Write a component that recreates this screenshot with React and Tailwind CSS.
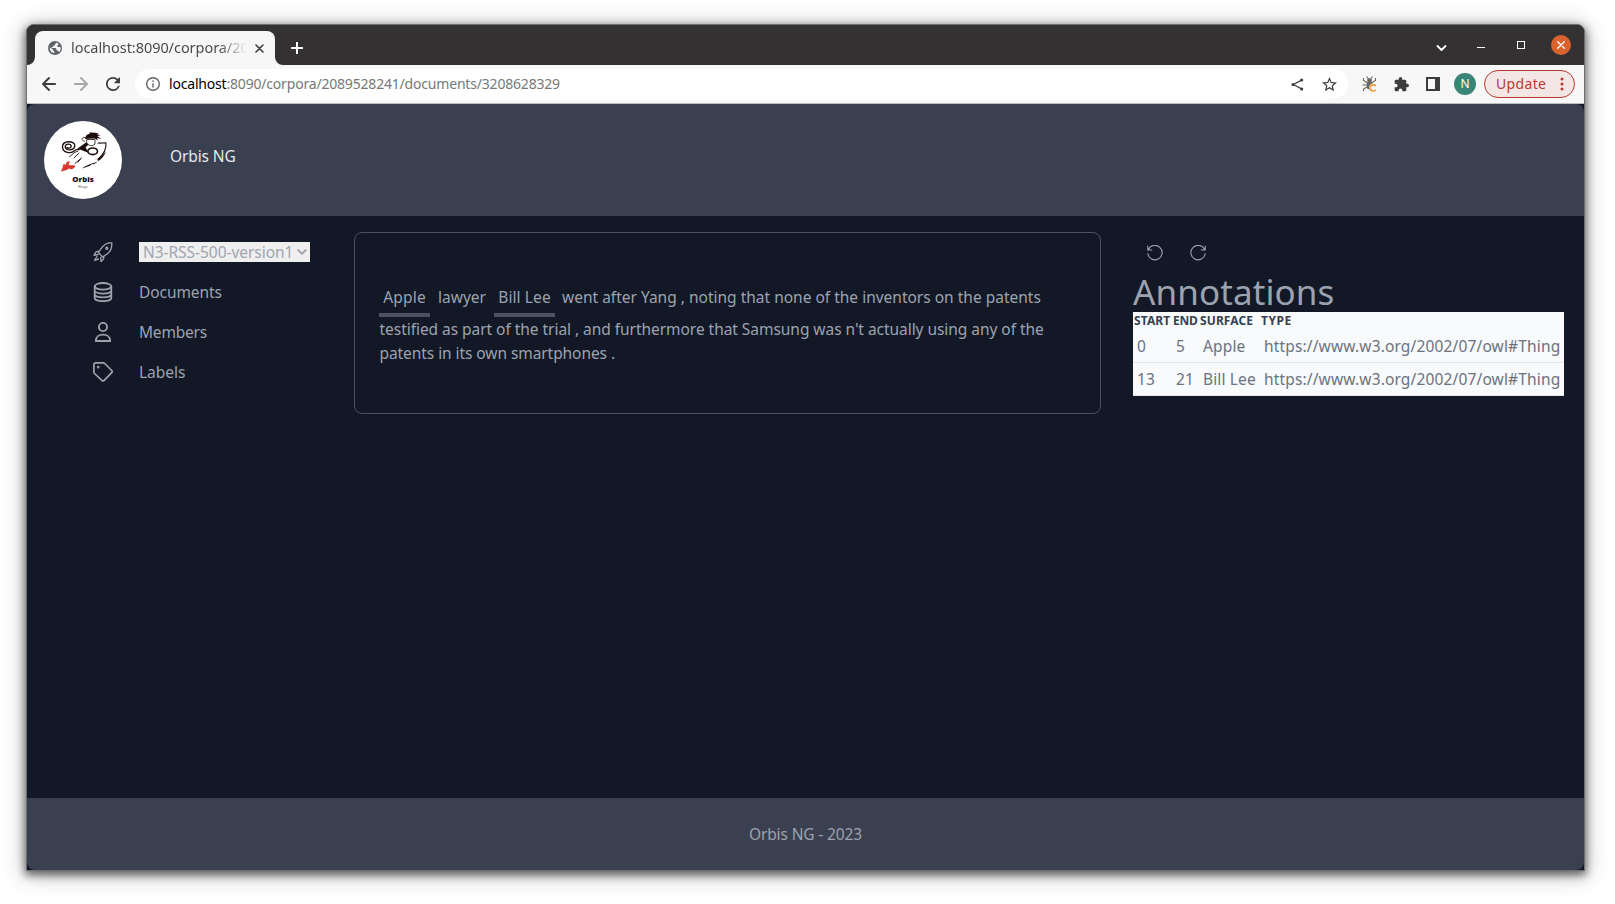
import React from "react";

function Svg({ children, className, box = "0 0 24 24", sw = 1.5 }) {
  return (
    <svg
      viewBox={box}
      className={className}
      fill="none"
      stroke="currentColor"
      strokeWidth={sw}
      strokeLinecap="round"
      strokeLinejoin="round"
    >
      {children}
    </svg>
  );
}

function TabBar() {
  return (
    <div className="flex h-10 shrink-0 items-end bg-[#333132]">
      <svg viewBox="0 0 8 8" className="size-2 shrink-0 fill-[#f7f7f7]">
        <path d="M8 0v8H0a8 8 0 0 0 8-8Z" />
      </svg>
      <div className="flex h-[34px] w-[240px] shrink-0 items-center rounded-t-lg bg-[#f7f7f7] pl-[13px]">
        <svg viewBox="0 0 14 14" className="size-[14px] shrink-0">
          <circle cx="7" cy="7" r="7" fill="#5f6368" />
          <path
            d="M8.6 1.7 7 3.2v1.3H5.3v1.6H3.8l-.1 1h3.8l1 1v1.5h1.6l.9 1.6c1.5-1.3 2-3.3 1.4-5.2H10L8.8 4.8l1.8-1.1c.2-.8-.8-1.6-2-2ZM1.7 6.6c-.2 2.9 1.7 5.2 4.6 5.7v-1.7L4.800 9.300V8.200Z"
            fill="#f7f7f7"
          />
        </svg>
        <span className="mb-0.5 ml-[9px] w-[176px] overflow-hidden bg-linear-to-r from-[#454647] from-84% to-transparent bg-clip-text text-[14.5px] leading-5 tracking-[-0.05px] whitespace-nowrap text-transparent">
          localhost:8090/corpora/20
        </span>
        <Svg className="ml-2 size-[9px] shrink-0 text-[#3c4043]" box="0 0 9 9" sw={1.6}>
          <path d="M1 1l7 7M8 1L1 8" />
        </Svg>
      </div>
      <svg viewBox="0 0 8 8" className="size-2 shrink-0 fill-[#f7f7f7]">
        <path d="M0 0v8h8a8 8 0 0 1-8-8Z" />
      </svg>
      <div className="flex h-[34px] flex-1 items-center pr-[13px] pl-2 text-white">
        <Svg className="size-3" box="0 0 12 12" sw={2}>
          <path d="M6 .8v10.400M.8 6h10.400" />
        </Svg>
        <div className="flex-1" />
        <div className="flex items-center pb-1.5">
          <Svg className="mt-[6px] size-[11px]" box="0 0 11 11" sw={1.800}>
            <path d="M1.500 3l4 4 4-4" />
          </Svg>
          <div className="mt-[5px] ml-[30px] h-px w-2 bg-white" />
          <div className="ml-8 size-2 border border-white" />
          <div className="ml-[26px] flex size-5 items-center justify-center rounded-full bg-[#d9622f]">
            <Svg className="size-2" box="0 0 8 8" sw={1.3}>
              <path d="M.7.7l6.600 6.600M7.300.7L.7 7.300" />
            </Svg>
          </div>
        </div>
      </div>
    </div>
  );
}

function BugIcon() {
  return (
    <svg viewBox="0 0 16 16" className="size-4">
      <g stroke="#6b6762" strokeWidth="1.100" fill="none">
        <path d="M4.500.5l2 2.500M10.500.5l-2 2.500M5 6.500L1.500 4.500V2M10 6.500l3.500-2V2M4.500 9H.5M5 11l-3.500 2v2M10.500 8.500H14" />
      </g>
      <ellipse cx="7.500" cy="4" rx="2.500" ry="1.700" fill="#6b6762" />
      <ellipse cx="7.500" cy="9" rx="3" ry="4.500" fill="#6b6762" />
      <circle cx="11.200" cy="11.800" r="4.200" fill="#f7f7f7" />
      <path d="M13.700 10.200a3.100 3.100 0 1 0 0 3.400" stroke="#f29a38" strokeWidth="1.700" fill="none" />
    </svg>
  );
}

function Toolbar() {
  return (
    <div className="flex h-[39px] shrink-0 items-center border-b border-[#b9bdbf] bg-[#f7f7f7] pr-[9px] pl-[15px] text-[#3c3d3f]">
      <Svg className="size-[14px]" box="0 0 14 14" sw={1.900}>
        <path d="M13.200 7H1.300M7 1L1 7l6 6" />
      </Svg>
      <Svg className="ml-[18px] size-[14px] text-[#a7a7a7]" box="0 0 14 14" sw={1.900}>
        <path d="M.8 7h11.900M7 1l6 6-6 6" />
      </Svg>
      <svg viewBox="4 4 16 16" className="ml-[18px] size-[14px] fill-current">
        <path d="M17.650 6.350A7.960 7.960 0 0 0 12 4a8 8 0 1 0 7.730 10h-2.080A6 6 0 1 1 12 6c1.660 0 3.140.69 4.220 1.780L13 11h7V4l-2.350 2.350z" />
      </svg>
      <div className="ml-[15px] flex h-[30px] flex-1 items-center rounded-full bg-white pr-[11px] pl-[11px]">
        <svg viewBox="0 0 14 14" className="size-[14px]">
          <circle cx="7" cy="7" r="6.300" fill="none" stroke="#5f6368" strokeWidth="1.400" />
          <path d="M6.300 6.200h1.400v4.300H6.300zM6.300 3.500h1.400v1.400H6.300z" fill="#5f6368" />
        </svg>
        <span className="ml-[9px] text-[14px] leading-5 tracking-[-0.19px] text-[#75787b]">
          <span className="text-black">localhost</span>:8090/corpora/2089528241/documents/3208628329
        </span>
        <div className="flex-1" />
        <svg viewBox="0 0 14 14" className="size-[13px]">
          <path d="M11.500 2.300L2.500 7l9 4.700" fill="none" stroke="currentColor" strokeWidth="1.300" />
          <circle cx="11.500" cy="2.200" r="1.700" fill="currentColor" />
          <circle cx="2.200" cy="7" r="1.700" fill="currentColor" />
          <circle cx="11.500" cy="11.800" r="1.700" fill="currentColor" />
        </svg>
        <svg viewBox="2 2 20 20" className="ml-[18px] size-[15px] fill-current">
          <path d="M22 9.240l-7.190-.62L12 2 9.190 8.630 2 9.240l5.460 4.730L5.820 21 12 17.270 18.180 21l-1.630-7.030L22 9.240zM12 15.400l-3.760 2.270 1-4.280-3.320-2.880 4.380-.38L12 6.100l1.710 4.040 4.380.38-3.320 2.880 1 4.280L12 15.400z" />
        </svg>
      </div>
      <div className="ml-[14px]">
        <BugIcon />
      </div>
      <svg viewBox="1 1 22 22" className="ml-4 size-[15px] fill-current">
        <path d="M20.500 11H19V7a2 2 0 0 0-2-2h-4V3.500a2.500 2.500 0 0 0-5 0V5H4a2 2 0 0 0-2 2v3.800h1.500a2.700 2.700 0 0 1 0 5.400H2V20a2 2 0 0 0 2 2h3.800v-1.500a2.700 2.700 0 0 1 5.400 0V22H17a2 2 0 0 0 2-2v-4h1.500a2.500 2.500 0 0 0 0-5z" />
      </svg>
      <div className="ml-[17px] h-[14px] w-[14px] border-2 border-r-[5px] border-current" />
      <div className="ml-[14px] flex size-[22px] items-center justify-center rounded-full bg-[#3a8577] text-[12px] text-white">
        N
      </div>
      <div className="ml-2 flex h-7 w-[91px] items-center rounded-full border border-[#b73a2e] bg-[#f3e6e5] pl-[11px] text-[#b73a2e]">
        <span className="w-[50px] text-[14px] leading-5 tracking-[0.35px]">Update</span>
        <svg viewBox="0 0 4 14" className="ml-[14px] h-[14px] w-1 fill-current">
          <circle cx="2" cy="2" r="1.500" />
          <circle cx="2" cy="7" r="1.500" />
          <circle cx="2" cy="12" r="1.500" />
        </svg>
      </div>
    </div>
  );
}

function Logo() {
  return (
    <svg viewBox="0 0 78 78" className="size-[78px] shrink-0">
      <circle cx="39" cy="39" r="39" fill="#fff" />
      <g fill="none" stroke="#1d0b0b" strokeLinecap="round">
        <path d="M23 26.500c1 1.200 4.200.8 4.200-1.500 0-2.800-6-2.600-6 .8 0 4.500 9.600 4 9.600-1.300 0-5-12.300-5.500-12.300 1.300 0 6.500 9 7 12 4 1.500-1.600 2.500-1.800 4.500-1.300" strokeWidth="1.350" />
        <ellipse cx="48.700" cy="30.300" rx="4.800" ry="3.300" strokeWidth="1.600" />
        <path d="M54 22c3.500.5 6-.5 8 0 .5 6-2.500 11.500-8 16.500" strokeWidth="1.100" />
        <path d="M34 30c-3 1-6 3-8.500 6M35 32l-5 5M37.500 37l-6.500 5.500M36.500 38l-2.500 3" strokeWidth=".9" />
        <path d="M41 16.500c-3.500-.5-4.500 3-.5 3.700M43 18.500h8v4.500c-2.500 2.500-6 2-8-.500zM42 17h10" strokeWidth=".8" />
      </g>
      <g fill="#1d0b0b">
        <path d="M41 18c.3-3 2-5 5-5.200L45 11.500c3.500-.2 7 .2 10 .8l-2.500.8 4 1.200-3.200.6 4 3-4.300-.9 1 2.500-3.500-2.300-5 .2z" />
        <path d="M33.500 27.500l8.500-6 2.500 2-3 3 3.500 5.500-6.500-2.500z" />
        <path d="M62 30c-1.500 4.500-4 8-8.500 10.500l1.500-3.500-4.500 2c5-2.500 8.500-4.500 11.500-9zM54 40.500c-4 1.500-11 3-16 7l7.500-2.500 3-2.200 1 .7z" />
      </g>
      <path d="M16.500 50.500c2.500-2.500 1.500-5 3.500-8l1.500 2c0-2.500 1.500-4 4.500-4.500l-1.500 3.500c2 1.500 4.500 0 7 1.500-1.500 3-4 4-6.500 2.500-2.500 2-5 2.500-8.500 3z" fill="#d83b2d" />
      <text
        x="39"
        y="60.500"
        textAnchor="middle"
        textLength="21.500"
        lengthAdjust="spacingAndGlyphs"
        fill="#1d0b0b"
        className="font-['Open_Sans'] text-[7px] font-extrabold"
      >
        Orbis
      </text>
      <text x="39" y="66.500" textAnchor="middle" textLength="10" fill="#7b7474" className="font-['Noto_Sans'] text-[4.200px]">
        Ringo
      </text>
    </svg>
  );
}

function NavItem({ icon, children }) {
  return (
    <li className="flex h-10 items-center">
      <span className="flex w-[46px] shrink-0">{icon}</span>
      {children}
    </li>
  );
}

function Sidebar() {
  return (
    <ul className="w-[262px] shrink-0 pt-4 pl-px text-[15.500px]">
      <NavItem
        icon={
          <Svg className="size-5" box="0 0 20 20" sw={1.350}>
            <path d="M5.500 10.500C8 6 11 2.300 15 1.200c1.500-.4 3-.3 3.800-.2.200 4-1 8-4 10.500L9.500 15zM6.500 9L3 9.800l-2 3.500 4-.8M11 14.200l-.5 2.800-2.500 2.500-.3-4M4 14.500L1.500 18.300l4-1.300" />
            <circle cx="13.800" cy="6.200" r="1" />
          </Svg>
        }
      >
        <div className="flex h-5 w-[171px] items-center bg-[#efefef] pl-1 text-[#a1a5b0]">
          <span className="w-[150px] leading-5 tracking-[-0.04px] whitespace-nowrap">N3-RSS-500-version1</span>
          <Svg className="ml-1 size-[10px] shrink-0" box="0 0 10 10" sw={1.800}>
            <path d="M1.200 3L5 6.800 8.800 3" />
          </Svg>
        </div>
      </NavItem>
      <NavItem
        icon={
          <Svg className="size-5" box="0 0 20 20" sw={1.800}>
            <ellipse cx="10" cy="4.300" rx="8.300" ry="3.300" />
            <path d="M1.700 4.300v11.500c0 4.500 16.600 4.500 16.600 0V4.300M1.700 8.200c0 4.500 16.600 4.500 16.600 0M1.700 12c0 4.500 16.600 4.500 16.600 0" />
          </Svg>
        }
      >
        <span className="pt-0.5 tracking-[-0.08px]">Documents</span>
      </NavItem>
      <NavItem
        icon={
          <Svg className="size-5" box="0 0 20 20" sw={1.900}>
            <circle cx="10" cy="5" r="4.100" />
            <path d="M2.800 19c0-8.500 14.400-8.500 14.400 0z" />
          </Svg>
        }
      >
        <span className="pt-0.5 tracking-[-0.2px]">Members</span>
      </NavItem>
      <NavItem
        icon={
          <Svg className="size-5" box="0 0 20 20" sw={1.700}>
            <path d="M.9 2.700C.9 1.500 1.500.9 2.700.9h7.600c.6 0 1 .2 1.400.6l7 7c.7.7.7 1.500 0 2.200l-7.500 7.700c-.8.800-1.500.8-2.300 0L1.500 11.500c-.4-.4-.6-.8-.6-1.400z" />
            <circle cx="5.200" cy="5.200" r=".5" />
          </Svg>
        }
      >
        <span className="pt-0.5">Labels</span>
      </NavItem>
    </ul>
  );
}

function Mark({ children, className }) {
  return (
    <span className={"inline-block border-b-4 border-[#4b515f] text-center leading-6 " + className}>
      {children}
    </span>
  );
}

function DocumentCard() {
  return (
    <div className="mt-4 h-[182px] w-[747px] shrink-0 rounded-lg border border-[#4b515f] pt-[52px] pl-6 text-[15.500px] leading-6 whitespace-nowrap">
      <div className="flex h-8">
        <Mark className="h-8 w-[51px] pb-1 tracking-[0.2px]">Apple</Mark>
        <span className="ml-2 w-14">lawyer</span>
        <Mark className="h-8 w-[61px] pb-1 tracking-[0.1px]">Bill Lee</Mark>
        <span className="ml-[7px]">went after Yang , noting that none of the inventors on the patents</span>
      </div>
      <div className="pl-[0.5px] tracking-[-0.043px]">
        testified as part of the trial , and furthermore that Samsung was n't actually using any of the
      </div>
      <div className="pl-[0.5px] tracking-[-0.07px]">patents in its own smartphones .</div>
    </div>
  );
}

const rows = [
  ["0", "5", "Apple", "https://www.w3.org/2002/07/owl#Thing"],
  ["13", "21", "Bill Lee", "https://www.w3.org/2002/07/owl#Thing"],
];

function Annotations() {
  return (
    <div className="ml-8 w-[431px] shrink-0 pt-[29px]">
      <div className="flex h-4 items-center gap-[27px] pl-[14px]">
        <Svg className="size-4" box="0 0 16 16" sw={1.100}>
          <path d="M.8 1v4h4M1.300 4.800A7.200 7.200 0 1 1 .8 8.500" />
        </Svg>
        <Svg className="size-4" box="0 0 16 16" sw={1.100}>
          <path d="M15.200 1v4h-4M14.700 4.800A7.200 7.200 0 1 0 15.200 8.500" />
        </Svg>
      </div>
      <h1 className="mt-[11px] flex h-10 items-center text-[35px] leading-10 tracking-[0.1px]">Annotations</h1>
      <div className="bg-[#f9fafb] text-[15.500px] text-[#6b7280]">
        <div className="grid h-[18px] grid-cols-[39px_27px_61px_1fr] pl-px text-[12px] leading-[17px] font-bold text-[#374151]">
          <span className="tracking-[0.1px]">START</span>
          <span className="tracking-[-0.2px]">END</span>
          <span className="tracking-[0.1px]">SURFACE</span>
          <span className="tracking-[0.5px]">TYPE</span>
        </div>
        {rows.map((r) => (
          <div
            key={r[0]}
            className="grid h-[33px] grid-cols-[39px_27px_61px_1fr] border-b border-[#e3e5e9] pl-1 leading-8 tracking-[0.15px] whitespace-nowrap"
          >
            {r.map((c) => (
              <span key={c}>{c}</span>
            ))}
          </div>
        ))}
      </div>
    </div>
  );
}

export default function App() {
  return (
    <div className="h-[904px] w-[1615px] overflow-hidden bg-white pt-6 pl-[26px] font-['Noto_Sans',sans-serif]">
      <div className="flex h-[847px] w-[1559px] flex-col overflow-hidden rounded-t-lg border border-[#6e6f71] bg-[#111827] shadow-[0_3px_9px_1px_rgba(0,0,0,0.55),0_3px_22px_2px_rgba(0,0,0,0.25)]">
        <TabBar />
        <Toolbar />
        <header className="flex h-28 shrink-0 items-center rounded-t-lg bg-[#3a404f] pl-[17px]">
          <Logo />
          <span className="mb-1.5 ml-12 text-[15.500px] tracking-[-0.12px] text-[#e5e7eb]">Orbis NG</span>
        </header>
        <main className="flex h-[582px] shrink-0 bg-[#121826] pl-[65px] text-[#9ca3af]">
          <Sidebar />
          <DocumentCard />
          <Annotations />
        </main>
        <footer className="flex flex-1 items-center justify-center rounded-b-lg bg-[#3a404f] pt-0.5 text-[15.500px] tracking-[-0.13px] text-[#9ca3af]">
          Orbis NG - 2023
        </footer>
      </div>
    </div>
  );
}
